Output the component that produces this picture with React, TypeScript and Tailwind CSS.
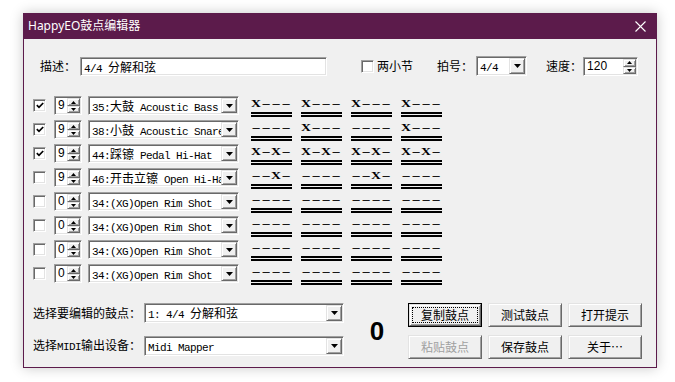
import type { ReactNode } from "react";

type Row = { on: boolean; vol: string; name: string; pats: string[] };

const rows: Row[] = [
  { on: true, vol: "9", name: "35:大鼓 Acoustic Bass", pats: ["X---", "X---", "X---", "X---"] },
  { on: true, vol: "9", name: "38:小鼓 Acoustic Snare", pats: ["----", "X---", "----", "X---"] },
  { on: true, vol: "9", name: "44:踩镲 Pedal Hi-Hat", pats: ["X-X-", "X-X-", "X-X-", "X-X-"] },
  { on: false, vol: "9", name: "46:开击立镲 Open Hi-Hat", pats: ["--X-", "----", "--X-", "----"] },
  { on: false, vol: "0", name: "34:(XG)Open Rim Shot", pats: ["----", "----", "----", "----"] },
  { on: false, vol: "0", name: "34:(XG)Open Rim Shot", pats: ["----", "----", "----", "----"] },
  { on: false, vol: "0", name: "34:(XG)Open Rim Shot", pats: ["----", "----", "----", "----"] },
  { on: false, vol: "0", name: "34:(XG)Open Rim Shot", pats: ["----", "----", "----", "----"] },
];

const sunken =
  "border border-t-[#a0a0a0] border-l-[#a0a0a0] border-r-white border-b-white shadow-[inset_1px_1px_#696969,inset_-1px_-1px_#e3e3e3]";
const raised =
  "bg-[#f0f0f0] border border-t-[#e3e3e3] border-l-[#e3e3e3] border-r-[#696969] border-b-[#696969] shadow-[inset_1px_1px_#ffffff,inset_-1px_-1px_#a0a0a0]";

// half-width runs get a narrow mono face, like the old SimSun look
function Txt({ s }: { s: string }) {
  const parts = s.match(/[\x20-\x7e]+|[^\x20-\x7e]+/g) ?? [];
  return (
    <>
      {parts.map((p, i) =>
        /^[\x20-\x7e]/.test(p) ? (
          <span key={i} className="font-['Liberation_Mono',monospace] text-[11px] tracking-[-0.6px]">
            {p}
          </span>
        ) : (
          <span key={i}>{p}</span>
        )
      )}
    </>
  );
}

function Tri({ up, small }: { up?: boolean; small?: boolean }) {
  const w = small ? 5 : 7;
  const h = small ? 3 : 4;
  return (
    <svg width={w} height={h} viewBox={`0 0 ${w} ${h}`}>
      <path d={up ? `M0 ${h} L${w / 2} 0 L${w} ${h}Z` : `M0 0 L${w} 0 L${w / 2} ${h}Z`} fill="#000" />
    </svg>
  );
}

function Check({ on }: { on: boolean }) {
  return (
    <div className={`w-[13px] h-[13px] bg-white flex items-center justify-center ${sunken}`}>
      {on && (
        <svg width="8" height="7" viewBox="0 0 8 7">
          <path d="M0.8 3.2 L3 5.4 L7.2 1" fill="none" stroke="#000" strokeWidth="1.7" />
        </svg>
      )}
    </div>
  );
}

function Combo({ w, h, text }: { w: string; h: string; text: string }) {
  return (
    <div className={`${w} ${h} bg-white flex p-[1px] ${sunken}`}>
      <div className="flex-1 overflow-hidden whitespace-pre pl-[2px] text-[12px] leading-[15px]">
        <Txt s={text} />
      </div>
      <div className={`w-[16px] flex items-center justify-center ${raised}`}>
        <Tri />
      </div>
    </div>
  );
}

function Spin({ w, val }: { w: string; val: string }) {
  return (
    <div className={`${w} h-[19px] bg-white flex p-[1px] ${sunken}`}>
      <div className="flex-1 pl-[2px] font-['Liberation_Sans',sans-serif] text-[12px] leading-[15px]">{val}</div>
      <div className="w-[13px] flex flex-col">
        <div className={`h-[8px] flex items-center justify-center ${raised}`}>
          <Tri up small />
        </div>
        <div className={`flex-1 flex items-center justify-center ${raised}`}>
          <Tri small />
        </div>
      </div>
    </div>
  );
}

function Pat({ p }: { p: string }) {
  return (
    <div className="w-[41px] mt-[2px]">
      <div className="flex h-[13px]">
        {p.split("").map((c, i) =>
          c === "X" ? (
            <span
              key={i}
              className="w-[10px] flex items-center justify-center font-['Liberation_Serif',serif] font-bold text-[11px] leading-none scale-x-125"
            >
              X
            </span>
          ) : (
            <span key={i} className="w-[10px] flex items-center justify-center font-['Liberation_Sans',sans-serif] text-[13px] leading-none">
              –
            </span>
          )
        )}
      </div>
      <div className="mt-[2px] h-[2px] bg-black" />
      <div className="mt-[1px] h-[2px] bg-black" />
    </div>
  );
}

function Btn({ children, def, dis }: { children: ReactNode; def?: boolean; dis?: boolean }) {
  return (
    <div className={`relative w-[74px] h-[24px] ${def ? "border border-black" : ""}`}>
      <div className={`w-full h-full flex items-center justify-center text-[12px] ${raised} ${dis ? "text-[#a0a0a0]" : "text-black"}`}>
        {children}
      </div>
      {def && <div className="absolute inset-[3px] border border-dotted border-black" />}
    </div>
  );
}

export default function App() {
  return (
    <div className="w-[675px] h-[382px] bg-white pt-[13px] pl-[23px] font-['Noto_Sans_CJK_SC','Noto_Sans',sans-serif] text-black">
      <div className="w-[634px] h-[355px] flex flex-col bg-[#f0f0f0] border border-t-0 border-[#5c1b4b] shadow-[0_0_12px_rgba(0,0,0,0.22)]">
        {/* Title bar */}
        <div className="h-[26px] shrink-0 bg-[#5c1b4b] flex items-center justify-between pl-[4px] pr-[10px]">
          <span className="text-white text-[12px] font-['Noto_Sans','Noto_Sans_CJK_SC',sans-serif]">HappyEO鼓点编辑器</span>
          <svg width="11" height="11" viewBox="0 0 11 11">
            <path d="M0.5 0.5 L10.5 10.5 M10.5 0.5 L0.5 10.5" stroke="#fff" strokeWidth="1.1" />
          </svg>
        </div>

        {/* Header */}
        <div className="mt-[17px] h-[20px] flex items-center pl-[16px] text-[12px]">
          <span className="w-[40px]">描述：</span>
          <div className={`w-[247px] h-[19px] bg-white pl-[3px] text-[12px] leading-[17px] whitespace-pre ${sunken}`}>
            <Txt s="4/4 分解和弦" />
          </div>
          <div className="ml-[34px]">
            <Check on={false} />
          </div>
          <span className="ml-[3px]">两小节</span>
          <span className="ml-[24px]">拍号：</span>
          <div className="ml-[3px]">
            <Combo w="w-[51px]" h="h-[20px]" text="4/4" />
          </div>
          <span className="ml-[19px]">速度：</span>
          <div className="ml-[1px]">
            <Spin w="w-[55px]" val="120" />
          </div>
        </div>

        {/* Drum rows */}
        <div className="mt-[19px] flex flex-col">
          {rows.map((r, i) => (
            <div key={i} className="h-[24px] flex items-start pl-[9px]">
              <div className="mt-[4px]">
                <Check on={r.on} />
              </div>
              <div className="ml-[8px] mt-[1px]">
                <Spin w="w-[28px]" val={r.vol} />
              </div>
              <div className="ml-[6px] mt-[1px]">
                <Combo w="w-[151px]" h="h-[19px]" text={r.name} />
              </div>
              <div className="ml-[12px] flex gap-[9px]">
                {r.pats.map((p, j) => (
                  <Pat key={j} p={p} />
                ))}
              </div>
            </div>
          ))}
        </div>

        {/* Bottom */}
        <div className="mt-[16px] flex pl-[9px] text-[12px]">
          <div className="flex flex-col gap-[13px]">
            <div className="h-[20px] flex items-center">
              <span className="w-[111px] whitespace-pre">选择要编辑的鼓点：</span>
              <Combo w="w-[200px]" h="h-[20px]" text="1: 4/4 分解和弦" />
            </div>
            <div className="h-[20px] flex items-center">
              <span className="w-[111px] whitespace-pre">
                选择<Txt s="MIDI" />输出设备：
              </span>
              <Combo w="w-[200px]" h="h-[20px]" text="Midi Mapper" />
            </div>
          </div>
          <div className="ml-[22px] w-[22px] h-[56px] flex items-center justify-center font-['Liberation_Sans',sans-serif] font-bold text-[26px]">
            0
          </div>
          <div className="ml-[20px] grid grid-cols-3 gap-x-[6px] gap-y-[8px]">
            <Btn def>复制鼓点</Btn>
            <Btn>测试鼓点</Btn>
            <Btn>打开提示</Btn>
            <Btn dis>粘贴鼓点</Btn>
            <Btn>保存鼓点</Btn>
            <Btn>关于…</Btn>
          </div>
        </div>
      </div>
    </div>
  );
}
